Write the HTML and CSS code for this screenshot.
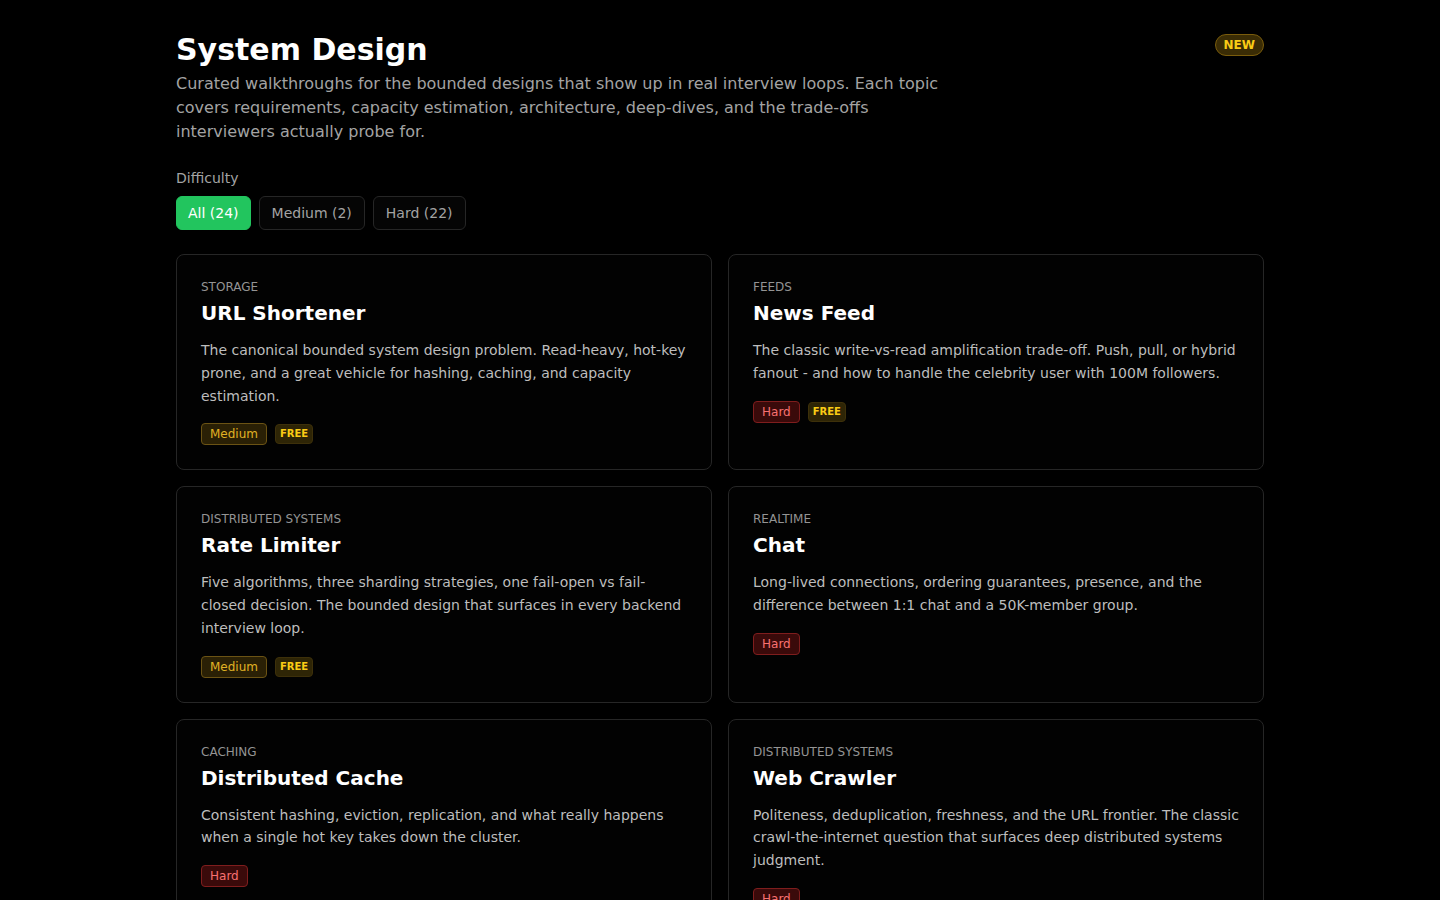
FILE: index.html
```html
<!DOCTYPE html>
<html lang="en">
<head>
    <meta charset="UTF-8">
    <meta name="viewport" content="width=device-width, initial-scale=1.0">
    <title>System Design</title>
    <link rel="stylesheet" href="styles.css">
</head>
<body>

<main class="page">
    <header class="page-header">
        <div class="intro">
            <h1>System Design</h1>
            <p>Curated walkthroughs for the bounded designs that show up in real interview loops. Each topic covers requirements, capacity estimation, architecture, deep-dives, and the trade-offs interviewers actually probe for.</p>
        </div>
        <span class="new-badge">NEW</span>
    </header>

    <section class="filters">
        <div class="filter-label">Difficulty</div>
        <div class="filter-row">
            <button class="filter active">All (24)</button>
            <button class="filter">Medium (2)</button>
            <button class="filter">Hard (22)</button>
        </div>
    </section>

    <section class="topics">
        <article class="card">
            <div class="category">Storage</div>
            <h2>URL Shortener</h2>
            <p>The canonical bounded system design problem. Read-heavy, hot-key prone, and a great vehicle for hashing, caching, and capacity estimation.</p>
            <div class="tags">
                <span class="tag medium">Medium</span>
                <span class="tag free">FREE</span>
            </div>
        </article>

        <article class="card">
            <div class="category">Feeds</div>
            <h2>News Feed</h2>
            <p>The classic write-vs-read amplification trade-off. Push, pull, or hybrid fanout - and how to handle the celebrity user with 100M followers.</p>
            <div class="tags">
                <span class="tag hard">Hard</span>
                <span class="tag free">FREE</span>
            </div>
        </article>

        <article class="card">
            <div class="category">Distributed Systems</div>
            <h2>Rate Limiter</h2>
            <p>Five algorithms, three sharding strategies, one fail-open vs fail-closed decision. The bounded design that surfaces in every backend interview loop.</p>
            <div class="tags">
                <span class="tag medium">Medium</span>
                <span class="tag free">FREE</span>
            </div>
        </article>

        <article class="card">
            <div class="category">Realtime</div>
            <h2>Chat</h2>
            <p>Long-lived connections, ordering guarantees, presence, and the difference between 1:1 chat and a 50K-member group.</p>
            <div class="tags">
                <span class="tag hard">Hard</span>
            </div>
        </article>

        <article class="card">
            <div class="category">Caching</div>
            <h2>Distributed Cache</h2>
            <p>Consistent hashing, eviction, replication, and what really happens when a single hot key takes down the cluster.</p>
            <div class="tags">
                <span class="tag hard">Hard</span>
            </div>
        </article>

        <article class="card">
            <div class="category">Distributed Systems</div>
            <h2>Web Crawler</h2>
            <p>Politeness, deduplication, freshness, and the URL frontier. The classic crawl-the-internet question that surfaces deep distributed systems judgment.</p>
            <div class="tags">
                <span class="tag hard">Hard</span>
            </div>
        </article>
    </section>
</main>

</body>
</html>
```

FILE: styles.css
```css
* {
    margin: 0;
    padding: 0;
    box-sizing: border-box;
}

body {
    background: #000;
    color: #fff;
    font-family: "DejaVu Sans", Verdana, sans-serif;
}

.page {
    max-width: 1152px;
    margin: 0 auto;
    padding: 32px 32px 48px;
}

.page-header {
    display: flex;
    justify-content: space-between;
    align-items: flex-start;
    gap: 24px;
}

.intro h1 {
    font-size: 30px;
    line-height: 36px;
    font-weight: bold;
}

.intro p {
    margin-top: 4px;
    max-width: 768px;
    font-size: 16px;
    line-height: 24px;
    color: #a3a3a3;
}

.new-badge {
    margin-top: 2px;
    padding: 2px 8px;
    border: 1px solid #7a5c0c;
    border-radius: 999px;
    background: #3a2c05;
    color: #facc15;
    font-size: 12px;
    line-height: 16px;
    font-weight: bold;
}

.filters {
    margin-top: 24px;
}

.filter-label {
    font-size: 14px;
    line-height: 20px;
    color: #a3a3a3;
    margin-bottom: 8px;
}

.filter-row {
    display: flex;
    gap: 8px;
}

.filter {
    font-family: inherit;
    font-size: 14px;
    line-height: 20px;
    padding: 6px 12px;
    border: 1px solid #262626;
    border-radius: 6px;
    background: #050505;
    color: #a3a3a3;
    cursor: pointer;
}

.filter.active {
    padding: 6px 11px;
    background: #22c55e;
    border-color: #22c55e;
    color: #fff;
}

.topics {
    margin-top: 24px;
    display: grid;
    grid-template-columns: 1fr 1fr;
    gap: 16px;
}

.card {
    border: 1px solid #262626;
    border-radius: 8px;
    background: #020202;
    padding: 24px;
}

.category {
    font-size: 12px;
    line-height: 16px;
    text-transform: uppercase;
    color: #949494;
}

.card h2 {
    margin-top: 4px;
    font-size: 20px;
    line-height: 28px;
    font-weight: bold;
}

.card p {
    margin-top: 12px;
    font-size: 14px;
    line-height: 22.75px;
    color: #bdbdbd;
}

.tags {
    margin-top: 16px;
    display: flex;
    gap: 8px;
    align-items: center;
}

.tag {
    font-size: 12px;
    line-height: 16px;
    padding: 2px 8px;
    border: 1px solid;
    border-radius: 4px;
}

.tag.medium {
    background: #2a2005;
    border-color: #6b5314;
    color: #e0b224;
}

.tag.hard {
    background: #3a0a0a;
    border-color: #7f1d1d;
    color: #f87171;
}

.tag.free {
    font-size: 10px;
    line-height: 14px;
    font-weight: bold;
    padding: 2px 4px;
    background: #2e2506;
    border-color: #3d300a;
    color: #facc15;
}
```
